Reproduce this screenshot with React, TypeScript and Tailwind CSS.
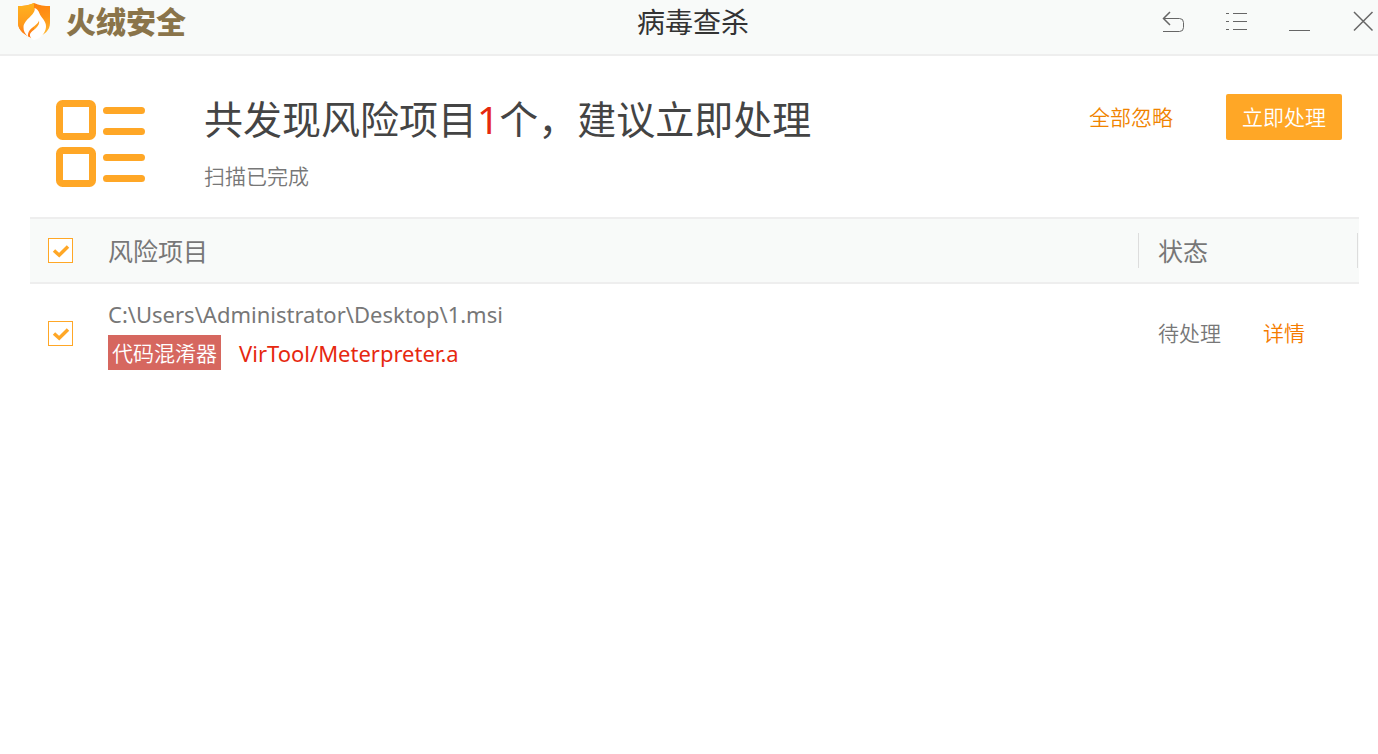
import { useState } from "react";

interface Risk {
  id: number;
  path: string;
  tag: string;
  name: string;
  status: string;
}

const risks: Risk[] = [
  {
    id: 1,
    path: "C:\\Users\\Administrator\\Desktop\\1.msi",
    tag: "代码混淆器",
    name: "VirTool/Meterpreter.a",
    status: "待处理",
  },
];

function ShieldLogo() {
  return (
    <svg width="34" height="38" viewBox="0 0 34 38" aria-hidden="true">
      <defs>
        <linearGradient id="shield" x1="0" y1="0" x2="0.3" y2="1">
          <stop offset="0" stopColor="#ff7a0c" />
          <stop offset="0.6" stopColor="#ff9416" />
          <stop offset="1" stopColor="#ffb52e" />
        </linearGradient>
        <linearGradient id="shieldSide" x1="0" y1="0" x2="0" y2="1">
          <stop offset="0" stopColor="#ffb31f" />
          <stop offset="0.6" stopColor="#ff9a1c" />
          <stop offset="1" stopColor="#ff6a14" />
        </linearGradient>
      </defs>
      <path
        d="M17 1C22 3.500 28 4 33 4V21C33 28 28 33 17 37C7 33 1 28 1 21V4C6 4 12 3.500 17 1Z"
        fill="url(#shield)"
      />
      <path
        d="M17 1V37C7 33 1 28 1 21V4C6 4 12 3.500 17 1Z"
        fill="url(#shieldSide)"
      />
      <path
        d="M17.500 6C19 13 7 17 6.500 25C6.300 29 8 32 11 34.500C10.500 29 14 26.500 17.500 24C20 22 21.500 20.500 22 18.500C23.500 25 15 28 13 32C12.400 34.500 14 37 17 38C24 36.500 28.500 31 29 25C29.500 19 24 15.500 22.500 11.500C21.500 8.500 20 7 17.500 6Z"
        fill="#fff"
      />
    </svg>
  );
}

function ListIcon() {
  return (
    <svg
      width="92"
      height="88"
      viewBox="0 0 92 88"
      fill="none"
      stroke="#ffa726"
      strokeWidth="7"
      strokeLinecap="round"
      aria-hidden="true"
    >
      <rect x="4.500" y="3.500" width="33" height="33" rx="3" />
      <rect x="4.500" y="50.500" width="33" height="33" rx="3" />
      <path d="M51.500 10.500H86.500M51.500 31.500H86.500M51.500 57.500H86.500M51.500 78.500H86.500" />
    </svg>
  );
}

function CheckBox({
  label,
  checked,
  onChange,
}: {
  label: string;
  checked: boolean;
  onChange: () => void;
}) {
  return (
    <label className="grid h-[25px] w-[25px] cursor-pointer">
      <input
        type="checkbox"
        aria-label={label}
        checked={checked}
        onChange={onChange}
        className="peer col-start-1 row-start-1 h-[25px] w-[25px] appearance-none border border-[#ffa726] bg-white"
      />
      <svg
        viewBox="0 0 25 25"
        fill="none"
        stroke="#ffa726"
        strokeWidth="3.500"
        className="pointer-events-none invisible col-start-1 row-start-1 h-[25px] w-[25px] peer-checked:visible"
      >
        <path d="M6 12.500L11.200 17.200L20 8.500" />
      </svg>
    </label>
  );
}

function TitleBar() {
  return (
    <header className="grid h-14 grid-cols-[1fr_auto_1fr] items-start border-b-2 border-[#eeeeee] bg-[#f8faf9]">
      <div className="flex items-start gap-[15px] pt-[2px] pl-[17px]">
        <ShieldLogo />
        <span className="text-[30px] leading-10 font-black text-[#8a744a]">
          火绒安全
        </span>
      </div>
      <h1 className="pt-px pl-2 text-[28px] leading-[42px] text-[#333333]">
        病毒查杀
      </h1>
      <div className="flex justify-end gap-[39px] pt-[9px] pr-[3px] text-[#666666]">
        <button type="button" aria-label="返回">
          <svg width="24" height="24" viewBox="0 0 24 24" fill="none" stroke="currentColor">
            <path d="M1 9.500H17.500Q21.500 9.500 21.500 13.500V18.500Q21.500 22.500 17.500 22.500H1" />
            <path d="M8 3L1.500 9.500L8 16" strokeWidth="1.500" />
          </svg>
        </button>
        <button type="button" aria-label="菜单">
          <svg width="24" height="24" viewBox="0 0 24 24" fill="none" stroke="currentColor">
            <path d="M1 4.500H4M8 4.500H22M1 12.500H4M8 12.500H22M1 20.500H4M8 20.500H22" />
          </svg>
        </button>
        <button type="button" aria-label="最小化">
          <svg width="24" height="24" viewBox="0 0 24 24" fill="none" stroke="currentColor">
            <path d="M1 21.500H22" />
          </svg>
        </button>
        <button type="button" aria-label="关闭">
          <svg width="24" height="24" viewBox="0 0 24 24" fill="none" stroke="currentColor">
            <path d="M3 3L21.500 21.500M21.500 3L3 21.500" strokeWidth="1.500" />
          </svg>
        </button>
      </div>
    </header>
  );
}

export default function App() {
  const [selected, setSelected] = useState<number[]>(risks.map((r) => r.id));

  const allSelected = selected.length === risks.length;

  const toggleAll = () => {
    setSelected(allSelected ? [] : risks.map((r) => r.id));
  };

  const toggle = (id: number) => {
    setSelected((prev) =>
      prev.includes(id) ? prev.filter((x) => x !== id) : [...prev, id]
    );
  };

  return (
    <div className="min-h-screen bg-white font-['Noto_Sans','Noto_Sans_CJK_SC',sans-serif] text-[#777777]">
      <TitleBar />

      <section className="flex items-start pt-[38px] pr-9 pb-[27px] pl-[55px]">
        <div className="pt-[6px]">
          <ListIcon />
        </div>
        <div className="ml-[57px] flex-1">
          <h2 className="text-[39px] leading-[50px] text-[#444444]">
            共发现风险项目<span className="text-[#e6280f]">1</span>
            个，建议立即处理
          </h2>
          <p className="mt-[19px] text-[21px] leading-[27px] font-[350]">
            扫描已完成
          </p>
        </div>
        <div className="flex items-center gap-[53px] text-[21px] font-[350]">
          <button type="button" className="pt-[2px] text-[#f08300]">
            全部忽略
          </button>
          <button
            type="button"
            className="h-[46px] rounded-xs bg-[#ffa726] px-4 pt-[2px] text-white"
          >
            立即处理
          </button>
        </div>
      </section>

      <main className="pr-[19px] pl-[30px]">
        <table className="w-full table-fixed border-separate border-spacing-0 text-left">
          <colgroup>
            <col className="w-[78px]" />
            <col />
            <col className="w-[221px]" />
          </colgroup>
          <thead className="bg-[#f8faf9] text-[25px] leading-[35px]">
            <tr>
              <th className="border-y-2 border-[#eeeeee] py-[14px] pl-[18px]">
                <CheckBox label="全选" checked={allSelected} onChange={toggleAll} />
              </th>
              <th className="border-y-2 border-[#eeeeee] py-[14px] font-normal">
                <div className="pt-[2px] leading-[33px]">风险项目</div>
              </th>
              <th className="border-y-2 border-[#eeeeee] py-[14px] pr-px font-normal">
                <div className="border-x border-[#dddddd] pt-[2px] pl-[19px] leading-[33px]">
                  状态
                </div>
              </th>
            </tr>
          </thead>
          <tbody className="text-[21px]">
            {risks.map((risk) => (
              <tr key={risk.id}>
                <td className="pl-[18px]">
                  <CheckBox
                    label={risk.path}
                    checked={selected.includes(risk.id)}
                    onChange={() => toggle(risk.id)}
                  />
                </td>
                <td className="pt-[13px] pb-3">
                  <p className="text-[22px] leading-[35px]">{risk.path}</p>
                  <div className="mt-[3px] flex gap-[18px] leading-[33px]">
                    <span className="bg-[#d6675f] px-1 pt-[2px] font-[350] text-white">
                      {risk.tag}
                    </span>
                    <span className="pt-[2px] text-[22px] text-[#e6280f]">
                      {risk.name}
                    </span>
                  </div>
                </td>
                <td className="pt-[2px] pl-5 font-[350]">
                  <div className="flex gap-[42px]">
                    <span>{risk.status}</span>
                    <button type="button" className="text-[#f57c00]">
                      详情
                    </button>
                  </div>
                </td>
              </tr>
            ))}
          </tbody>
        </table>
      </main>
    </div>
  );
}
